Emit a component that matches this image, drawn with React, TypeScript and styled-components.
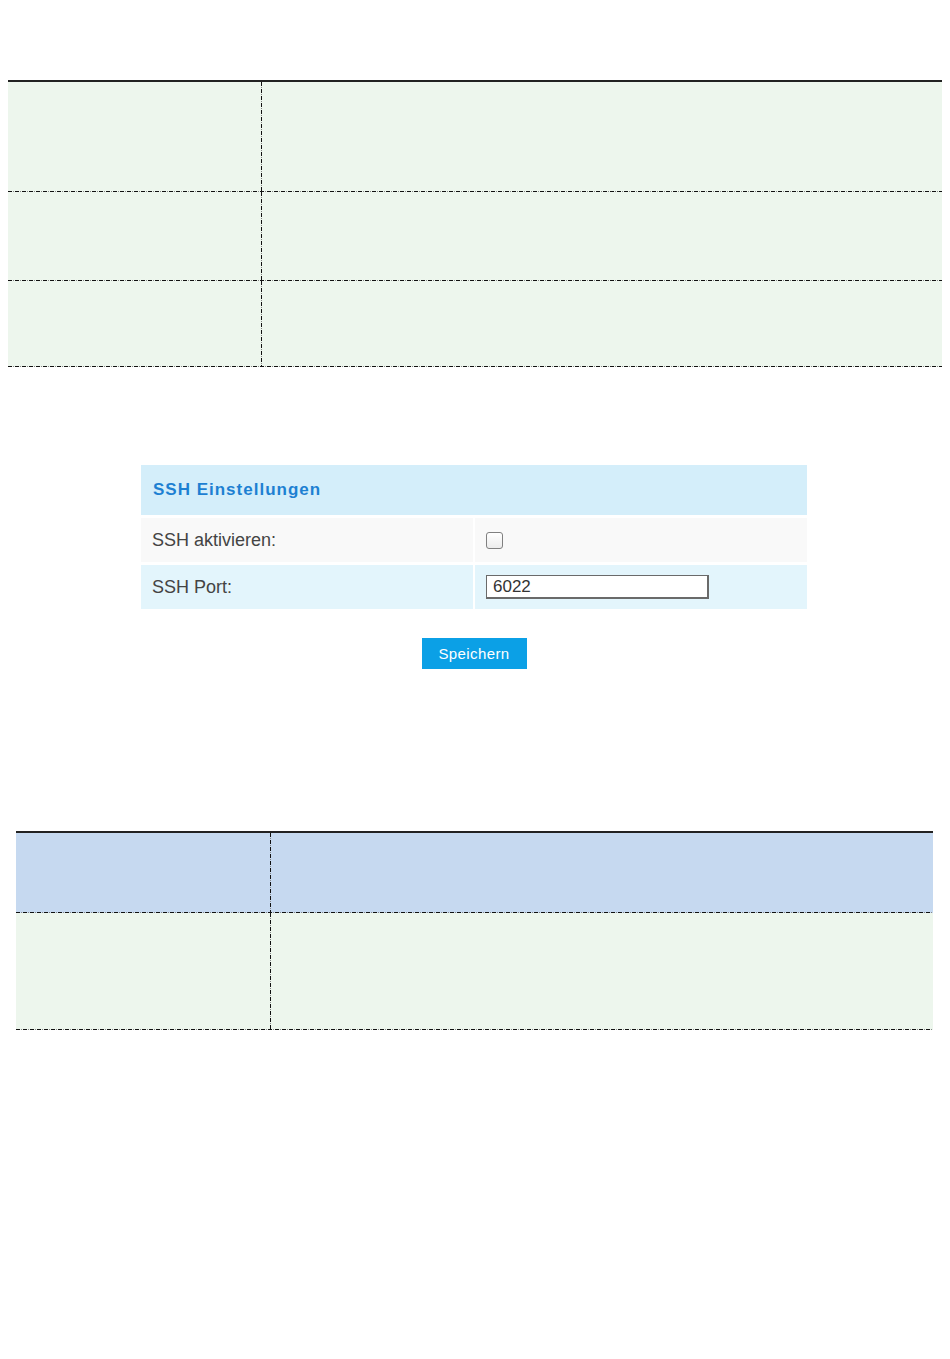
import styled, { createGlobalStyle } from "styled-components";

const GlobalStyle = createGlobalStyle`
  body {
    margin: 0;
    background: #ffffff;
    font-family: "Liberation Sans", Arial, sans-serif;
  }
`;

const dashH =
  "repeating-linear-gradient(90deg, #111 0 4px, transparent 4px 5px, #888 5px 6px, transparent 6px 7px)";
const dashV =
  "repeating-linear-gradient(180deg, #111 0 4px, transparent 4px 5px, #888 5px 6px, transparent 6px 7px)";

const Page = styled.div`
  display: flex;
  flex-direction: column;
  align-items: center;
  padding-top: 80px;
  padding-bottom: 330px;
`;

const Table = styled.div<{ $width: number; $shift: number }>`
  width: ${(p) => p.$width}px;
  margin-left: ${(p) => p.$shift}px;
  border-top: 2px solid #222;
  display: flex;
  flex-direction: column;
`;

const Row = styled.div<{ $h: number; $bg: string; $first: number }>`
  display: grid;
  grid-template-columns: ${(p) => p.$first}px 1fr;
  height: ${(p) => p.$h}px;
  background: ${dashH} left bottom / 100% 1px no-repeat, ${(p) => p.$bg};
`;

const LeftCell = styled.div`
  background: ${dashV} right top / 1px 100% no-repeat;
`;

const RightCell = styled.div``;

const Panel = styled.div`
  width: 666px;
  margin-top: 98px;
  margin-left: -2px;
  display: flex;
  flex-direction: column;
  gap: 3px;
`;

const PanelHead = styled.div`
  height: 50px;
  display: flex;
  align-items: center;
  padding-left: 12px;
  background: #d4eefa;
  color: #1d80d2;
  font-size: 17px;
  font-weight: bold;
  letter-spacing: 1px;
`;

const PanelRow = styled.div`
  display: grid;
  grid-template-columns: 332px 1fr;
  column-gap: 2px;
  height: 44px;
`;

const PanelCell = styled.div<{ $bg: string }>`
  display: flex;
  align-items: center;
  padding-left: 11px;
  background: ${(p) => p.$bg};
  color: #444;
  font-size: 18px;
`;

const Check = styled.span`
  width: 15px;
  height: 15px;
  border: 1px solid #808080;
  border-radius: 3px;
  background: linear-gradient(#ffffff, #ececec);
`;

const PortInput = styled.div`
  width: 214px;
  height: 21px;
  border: 1px solid #6a6a6a;
  border-bottom-width: 2px;
  border-right-width: 2px;
  background: #fff;
  padding-left: 6px;
  font-size: 17px;
  line-height: 21px;
  color: #333;
`;

const SaveButton = styled.div`
  margin-top: 29px;
  margin-left: -2px;
  width: 105px;
  height: 31px;
  display: flex;
  align-items: center;
  justify-content: center;
  background: #0ba0e6;
  color: #fff;
  font-size: 15px;
  letter-spacing: 0.4px;
`;

const Spacer = styled.div<{ $h: number }>`
  height: ${(p) => p.$h}px;
`;

export default function App() {
  return (
    <>
      <GlobalStyle />
      <Page>
        <Table $width={934} $shift={0}>
          <Row $h={110} $bg="#edf6ed" $first={254}>
            <LeftCell />
            <RightCell />
          </Row>
          <Row $h={89} $bg="#edf6ed" $first={254}>
            <LeftCell />
            <RightCell />
          </Row>
          <Row $h={86} $bg="#edf6ed" $first={254}>
            <LeftCell />
            <RightCell />
          </Row>
        </Table>

        <Panel>
          <PanelHead>SSH Einstellungen</PanelHead>
          <PanelRow>
            <PanelCell $bg="#f9f9f9">SSH aktivieren:</PanelCell>
            <PanelCell $bg="#f9f9f9">
              <Check />
            </PanelCell>
          </PanelRow>
          <PanelRow>
            <PanelCell $bg="#e3f5fc">SSH Port:</PanelCell>
            <PanelCell $bg="#e3f5fc">
              <PortInput>6022</PortInput>
            </PanelCell>
          </PanelRow>
        </Panel>

        <SaveButton>Speichern</SaveButton>

        <Spacer $h={162} />

        <Table $width={917} $shift={-1}>
          <Row $h={80} $bg="#c6d9f0" $first={255}>
            <LeftCell />
            <RightCell />
          </Row>
          <Row $h={117} $bg="#edf6ed" $first={255}>
            <LeftCell />
            <RightCell />
          </Row>
        </Table>
      </Page>
    </>
  );
}
